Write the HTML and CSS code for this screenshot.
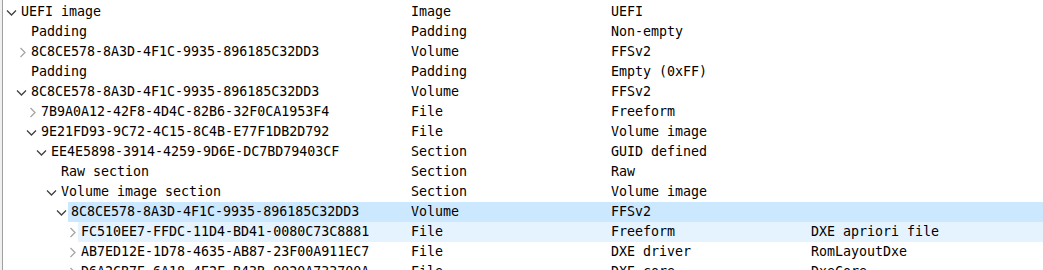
FILE: index.html
```html
<!DOCTYPE html>
<html lang="en">

<head>
    <meta charset="UTF-8">
    <title>UEFI structure</title>
    <link rel="stylesheet" href="styles.css">
</head>

<body>
    <div class="tree">
        <div class="row">
            <div class="name"><span class="gutter l0"><svg class="arr open" viewBox="0 0 12 20"><path d="M2 8.5 L6.5 13 L11 8.5"/></svg></span><span class="label">UEFI image</span></div>
            <div class="cell">Image</div>
            <div class="cell">UEFI</div>
            <div class="cell"></div>
        </div>
        <div class="row">
            <div class="name"><span class="gutter l1"></span><span class="label">Padding</span></div>
            <div class="cell">Padding</div>
            <div class="cell">Non-empty</div>
            <div class="cell"></div>
        </div>
        <div class="row">
            <div class="name"><span class="gutter l1"><svg class="arr" viewBox="0 0 12 20"><path d="M5.5 6 L10 10.5 L5.5 15"/></svg></span><span class="label">8C8CE578-8A3D-4F1C-9935-896185C32DD3</span></div>
            <div class="cell">Volume</div>
            <div class="cell">FFSv2</div>
            <div class="cell"></div>
        </div>
        <div class="row">
            <div class="name"><span class="gutter l1"></span><span class="label">Padding</span></div>
            <div class="cell">Padding</div>
            <div class="cell">Empty (0xFF)</div>
            <div class="cell"></div>
        </div>
        <div class="row">
            <div class="name"><span class="gutter l1"><svg class="arr open" viewBox="0 0 12 20"><path d="M2 8.5 L6.5 13 L11 8.5"/></svg></span><span class="label">8C8CE578-8A3D-4F1C-9935-896185C32DD3</span></div>
            <div class="cell">Volume</div>
            <div class="cell">FFSv2</div>
            <div class="cell"></div>
        </div>
        <div class="row">
            <div class="name"><span class="gutter l2"><svg class="arr" viewBox="0 0 12 20"><path d="M5.5 6 L10 10.5 L5.5 15"/></svg></span><span class="label">7B9A0A12-42F8-4D4C-82B6-32F0CA1953F4</span></div>
            <div class="cell">File</div>
            <div class="cell">Freeform</div>
            <div class="cell"></div>
        </div>
        <div class="row">
            <div class="name"><span class="gutter l2"><svg class="arr open" viewBox="0 0 12 20"><path d="M2 8.5 L6.5 13 L11 8.5"/></svg></span><span class="label">9E21FD93-9C72-4C15-8C4B-E77F1DB2D792</span></div>
            <div class="cell">File</div>
            <div class="cell">Volume image</div>
            <div class="cell"></div>
        </div>
        <div class="row">
            <div class="name"><span class="gutter l3"><svg class="arr open" viewBox="0 0 12 20"><path d="M2 8.5 L6.5 13 L11 8.5"/></svg></span><span class="label">EE4E5898-3914-4259-9D6E-DC7BD79403CF</span></div>
            <div class="cell">Section</div>
            <div class="cell">GUID defined</div>
            <div class="cell"></div>
        </div>
        <div class="row">
            <div class="name"><span class="gutter l4"></span><span class="label">Raw section</span></div>
            <div class="cell">Section</div>
            <div class="cell">Raw</div>
            <div class="cell"></div>
        </div>
        <div class="row">
            <div class="name"><span class="gutter l4"><svg class="arr open" viewBox="0 0 12 20"><path d="M2 8.5 L6.5 13 L11 8.5"/></svg></span><span class="label">Volume image section</span></div>
            <div class="cell">Section</div>
            <div class="cell">Volume image</div>
            <div class="cell"></div>
        </div>
        <div class="row selected">
            <div class="name"><span class="gutter l5"><svg class="arr open" viewBox="0 0 12 20"><path d="M2 8.5 L6.5 13 L11 8.5"/></svg></span><span class="label">8C8CE578-8A3D-4F1C-9935-896185C32DD3</span></div>
            <div class="cell">Volume</div>
            <div class="cell">FFSv2</div>
            <div class="cell"></div>
        </div>
        <div class="row hover">
            <div class="name"><span class="gutter l6"><svg class="arr" viewBox="0 0 12 20"><path d="M5.5 6 L10 10.5 L5.5 15"/></svg></span><span class="label">FC510EE7-FFDC-11D4-BD41-0080C73C8881</span></div>
            <div class="cell">File</div>
            <div class="cell">Freeform</div>
            <div class="cell">DXE apriori file</div>
        </div>
        <div class="row">
            <div class="name"><span class="gutter l6"><svg class="arr" viewBox="0 0 12 20"><path d="M5.5 6 L10 10.5 L5.5 15"/></svg></span><span class="label">AB7ED12E-1D78-4635-AB87-23F00A911EC7</span></div>
            <div class="cell">File</div>
            <div class="cell">DXE driver</div>
            <div class="cell">RomLayoutDxe</div>
        </div>
        <div class="row">
            <div class="name"><span class="gutter l6"><svg class="arr" viewBox="0 0 12 20"><path d="M5.5 6 L10 10.5 L5.5 15"/></svg></span><span class="label">D6A2CB7E-6A18-4E2F-B43B-9920A733700A</span></div>
            <div class="cell">File</div>
            <div class="cell">DXE core</div>
            <div class="cell">DxeCore</div>
        </div>
    </div>
</body>

</html>
```

FILE: styles.css
```css
html,
body {
    margin: 0;
    padding: 0;
    height: 100%;
    overflow: hidden;
}

body {
    background: #f0f0f0;
    padding-left: 2px;
    font-family: 'DejaVu Sans Mono', 'Liberation Mono', monospace;
    font-size: 13.3px;
    color: #000;
}

.tree {
    background: #fff;
    border-left: 1px solid #a0a0a0;
    height: 100%;
    padding-top: 2px;
    box-sizing: border-box;
}

.row {
    display: grid;
    grid-template-columns: 408px 200px 200px 1fr;
    height: 20px;
    line-height: 20px;
    white-space: nowrap;
}

.name {
    display: flex;
    overflow: hidden;
}

.gutter {
    flex: none;
    display: flex;
    justify-content: flex-end;
    padding-right: 1px;
    box-sizing: border-box;
}

.l0 { width: 15px; }
.l1 { width: 25px; }
.l2 { width: 35px; }
.l3 { width: 45px; }
.l4 { width: 55px; }
.l5 { width: 65px; }
.l6 { width: 75px; }

.arr {
    width: 12px;
    height: 20px;
    flex: none;
}

.arr path {
    fill: none;
    stroke: #a6a6a6;
    stroke-width: 1.3;
}

.arr.open path {
    stroke: #404040;
}

.label {
    flex: 1;
    padding-left: 3px;
    overflow: hidden;
}

.cell {
    overflow: hidden;
}

.selected .label,
.selected .cell {
    background: #cce8ff;
}

.hover .label,
.hover .cell {
    background: #e5f3ff;
}
```
